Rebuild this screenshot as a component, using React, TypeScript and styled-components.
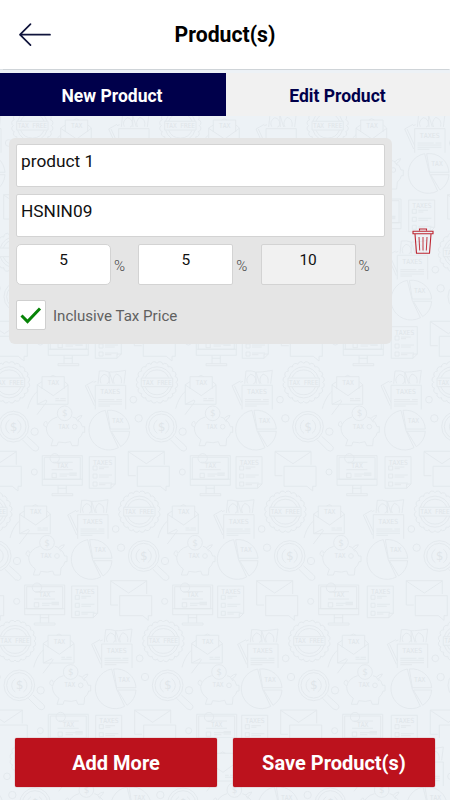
import React, { useState } from "react";
import styled, { createGlobalStyle } from "styled-components";

const GlobalStyle = createGlobalStyle`
  * { box-sizing: border-box; }
  body { margin: 0; background: #edf2f6; font-family: Roboto, sans-serif; }
  button, input { font-family: inherit; }
`;

const Screen = styled.div`
  position: relative;
  display: flex;
  flex-direction: column;
  width: 450px;
  height: 800px;
  overflow: hidden;
  background: #edf2f6;
`;

const Backdrop = styled.svg`
  position: absolute;
  inset: 0;
  width: 450px;
  height: 800px;
  fill: none;
  stroke: #e2e8ec;
  stroke-width: 2.7;
  text {
    fill: #dfe5e9;
    stroke: none;
    font-family: "DejaVu Sans Mono", monospace;
    text-anchor: middle;
  }
`;

const Header = styled.header`
  position: relative;
  display: grid;
  grid-template-columns: 70px 1fr 70px;
  align-items: center;
  height: 69px;
  flex: none;
  background: #fff;
  box-shadow: 0 0.5px 1px #cfd4d8;
`;

const BackButton = styled.button`
  display: flex;
  padding: 0 0 0 18px;
  border: 0;
  background: none;
`;

const Title = styled.h1`
  margin: 0;
  text-align: center;
  font-size: 21.2px;
  line-height: 28px;
  font-weight: 700;
  color: #000;
`;

const Tabs = styled.nav`
  position: relative;
  display: grid;
  grid-template-columns: 226px 1fr;
  height: 43px;
  margin-top: 3.7px;
  flex: none;
`;

const Tab = styled.button<{ $active?: boolean }>`
  padding: 3px ${(p) => (p.$active ? 2 : 1)}px 0 0;
  border: 0;
  font-size: 17.5px;
  font-weight: 700;
  color: ${(p) => (p.$active ? "#fff" : "#00004b")};
  background: ${(p) => (p.$active ? "#00004b" : "#f1f1f1")};
`;

const ProductRow = styled.section`
  position: relative;
  display: flex;
  align-items: center;
  margin: 22px 0 0 9px;
`;

const Card = styled.div`
  display: flex;
  flex-direction: column;
  gap: 7px;
  width: 383px;
  height: 206px;
  padding: 6px 7px;
  border-radius: 6px;
  background: #e5e5e5;
`;

const TextField = styled.input`
  width: 369px;
  height: 43px;
  padding: 0 4px 9px;
  border: 1px solid #d3d3d3;
  border-radius: 2px;
  background: #fff;
  font-size: 17.3px;
  color: #111;
  outline: none;
`;

const Rates = styled.div`
  display: flex;
`;

const Rate = styled.label`
  display: flex;
  align-items: center;
  width: 122.3px;
  gap: 3px;
  font-size: 15px;
  color: #444;
`;

const Percent = styled.span`
  padding-top: 3px;
  font-weight: 300;
`;

const RateInput = styled.input<{ $round?: boolean }>`
  width: 95px;
  height: 41px;
  padding: 0 0 8px;
  border: 1px solid #d3d3d3;
  border-radius: ${(p) => (p.$round ? 5 : 2)}px;
  background: #fff;
  text-align: center;
  font-size: 15.5px;
  color: #111;
  outline: none;
  &:read-only { background: #f1f1f1; }
`;

const CheckRow = styled.div`
  display: flex;
  align-items: center;
  gap: 7px;
  margin-top: 8px;
  font-size: 15.1px;
  color: #606060;
`;

const CheckLabel = styled.span`
  padding-top: 2px;
`;

const CheckBox = styled.button`
  display: flex;
  align-items: center;
  justify-content: center;
  width: 30px;
  height: 30px;
  padding: 0;
  border: 1px solid #cfcfcf;
  border-radius: 2px;
  background: #fff;
`;

const DeleteButton = styled.button`
  display: flex;
  margin: 0 0 0 20.3px;
  padding: 0;
  border: 0;
  background: none;
`;

const Footer = styled.footer`
  position: relative;
  display: flex;
  gap: 16px;
  margin-top: auto;
  padding: 0 15px 13px;
`;

const Action = styled.button`
  flex: 1;
  height: 49px;
  padding: 0;
  border: 0;
  border-radius: 2px;
  background: #bc121d;
  box-shadow: 0 0 1px #b5121b;
  font-size: 20px;
  font-weight: 700;
  color: #fff;
`;

const sealEdge = (() => {
  const points = 20;
  let d = "";
  for (let i = 0; i <= points; i++) {
    const a = (i / points) * Math.PI * 2;
    const x = (57 * Math.cos(a)).toFixed(1);
    const y = (57 * Math.sin(a)).toFixed(1);
    d += i === 0 ? `M${x} ${y}` : `A9.5 9.5 0 0 1 ${x} ${y}`;
  }
  return d;
})();

/* One group of tax drawings, in thirds of a pixel around the seal's centre. */
const Motif = () => (
  <>
    <path d={sealEdge} />
    <path d="M-44-14A46 46 0 0 1 44-14M-44 14A46 46 0 0 0 44 14" />
    <path d="M-35-14A38 38 0 0 1 35-14M-35 14A38 38 0 0 0 35 14" />
    <path d="M-47-13H47V13H-47Z" />

    <path d="M99-2 85 7V66H177V7L167-2M99 19V-17H166V19M85 8 133 40 177 8M124-17q8-8 16 0" />
    <path d="M85 27C75 36 63 52 56 79M85 66 111 53q5 2 1 7L84 97M139 49H150M154 49H170M139 55H170" />

    <path d="M-185 81V9H-94V81M-190-4-215 10-188 70M-208 10-185 60M-190 0-182-3" />
    <path d="M-177 4-173-34Q-157-36-144-31L-142 4M-132 4-143-31Q-128-30-94-36L-99 4M-168 3Q-176-13-159-24Q-143-21-144-4Q-145 4-151 4M-128 4Q-137-10-122-25Q-103-20-107 3" />
    <path d="M-176 52H-128M-122 52H-105M-176 58H-105M-176 65H-105M-176 71H-141" />

    <circle cx="-71" cy="52" r="10" />
    <circle cx="-55" cy="108" r="11" />
    <circle cx="77" cy="148" r="11" />
    <path d="M-155 84A60 60 0 1 0-116 196L-140 145ZM-149 84A60 60 0 0 1-82 140H-140ZM-82 147A60 60 0 0 1-109 193L-137 147Z" />

    <circle cx="13" cy="133" r="46" />
    <circle cx="13" cy="133" r="38" />
    <path d="M1 113A24 24 0 0 0 1 153M25 113A24 24 0 0 1 25 153M40 172 72 204Q82 210 88 202Q91 195 85 190L54 162" />

    <circle cx="167" cy="93" r="22" />
    <path d="M145 104Q117 112 112 137Q112 158 132 172L126 190H144L148 179Q170 184 184 178L189 190H207L209 169Q219 161 221 150H227V133H220Q216 119 207 113Q218 107 219 99Q209 100 202 108L191 104M201 109 209 120M112 134Q99 130 107 119Q114 114 114 124" />
    <circle cx="197" cy="133" r="7" />

    <path d="M100 220H220V309H100ZM106 225H214V291H106ZM100 291H220M147 309V334M172 309V334M147 318H172M129 334H191V340H129ZM128 262H191M132 240H191M181 272H203M181 279H203" />
    <circle cx="137" cy="228" r="14" />
    <path d="M129 273H142V286H129ZM152 275H203M152 281H174" />

    <circle cx="76" cy="269" r="9" />
    <path d="M-203 223H-125V305L-138 318H-203ZM-125 305H-138V318M-192 251H-180V263H-192ZM-192 275H-180V287H-192ZM-192 299H-180V311H-192ZM-174 254H-145M-174 259H-159M-174 278H-135M-174 284H-145M-174 302H-135M-174 307H-155" />

    <path d="M-64 280H-86V207H22V247M-86 208-32 244 22 208M-59 252H37V312H27V326L10 312H-59Z" />
  </>
);

const motifLabels = [
  { text: "TAX FREE", x: 0, y: 7, width: 88, size: 21 },
  { text: "TAX", x: 133, y: 8, width: 34, size: 21 },
  { text: "TAXES", x: -140, y: 36, width: 60, size: 21 },
  { text: "TAX", x: -118, y: 122, width: 34, size: 21 },
  { text: "TAX", x: 164, y: 139, width: 33, size: 21 },
  { text: "TAX", x: 160, y: 257, width: 34, size: 21 },
  { text: "TAXES", x: -163, y: 247, width: 58, size: 21 },
  { text: "$", x: 13, y: 145, width: 22, size: 38 },
  { text: "$", x: 167, y: 102, width: 16, size: 27 },
];

const motifRows = [
  { y: 377, xs: [-347, 97, 541, 983, 1429] },
  { y: 757, xs: [45, 489, 930, 1377] },
  { y: 1147, xs: [27, 471, 911, 1358] },
  { y: 1535, xs: [-26, 418, 856, 1305] },
  { y: 1923, xs: [45, 490, 928, 1377] },
  { y: 2277, xs: [-354, 92, 536, 978, 1424] },
];

/* Labels that the card, the buttons or the screen edge would hide are skipped. */
const isLabelVisible = (x: number, y: number, width: number) => {
  const left = x - width / 2;
  const right = x + width / 2;
  if (right < 8 || left > 1342) return false;
  if (y < 350) return false;
  if (y > 412 && y < 1040 && left < 1178) return false;
  if (y > 2210 && y < 2370) return false;
  return true;
};

const TaxBackdrop = () => (
  <Backdrop viewBox="0 0 1350 2400" aria-hidden="true">
    <defs>
      {motifRows.map((row, i) => (
        <clipPath id={`band-${i}`} key={row.y}>
          <rect
            x="0"
            y={i === 5 ? 2214 : i === 0 ? 210 : row.y - 65}
            width="1350"
            height={i === 4 ? 356 : i === 0 ? 520 : 410}
          />
        </clipPath>
      ))}
    </defs>
    {motifRows.map((row, i) => (
      <g key={row.y} clipPath={`url(#band-${i})`}>
        {row.xs.map((x) => (
          <g key={x} transform={`translate(${x} ${row.y})`}>
            <Motif />
          </g>
        ))}
      </g>
    ))}
    {motifRows.map((row) =>
      row.xs.map((x) =>
        motifLabels
          .filter((l) => isLabelVisible(x + l.x, row.y + l.y, l.width))
          .map((l) => (
            <text
              key={`${x}-${row.y}-${l.x}`}
              x={x + l.x}
              y={row.y + l.y}
              fontSize={l.size}
              textLength={l.width}
              lengthAdjust="spacingAndGlyphs"
            >
              {l.text}
            </text>
          ))
      )
    )}
  </Backdrop>
);

const ArrowIcon = () => (
  <svg width="34" height="26" viewBox="0 0 34 26" fill="none" stroke="#10143c" strokeWidth="1.7" strokeLinecap="round" strokeLinejoin="round">
    <path d="M12.5 2.2 2 12.7 12.5 23.2M2 12.7H32" />
  </svg>
);

const CheckIcon = () => (
  <svg width="22" height="20" viewBox="0 0 22 20" fill="none" stroke="#078307" strokeWidth="3">
    <path d="M1.5 10.5 7.5 16.5 20 3.5" />
  </svg>
);

const TrashIcon = () => (
  <svg width="22" height="28" viewBox="0 0 22 28" fill="none" stroke="#bd2430" strokeWidth="1.1">
    <path d="M7.5 3.5V2H14.5V3.5M1 4.2H21V6.7H1ZM3 7 4.5 26.3H17.5L19 7" />
    <path d="M7 10 7.7 23.5M11 10V23.5M15 10 14.3 23.5" strokeWidth="0.9" />
  </svg>
);

export default function App() {
  const [inclusive, setInclusive] = useState(true);
  return (
    <>
      <GlobalStyle />
      <Screen>
        <TaxBackdrop />
        <Header>
          <BackButton aria-label="Back"><ArrowIcon /></BackButton>
          <Title>Product(s)</Title>
        </Header>
        <Tabs>
          <Tab $active>New Product</Tab>
          <Tab>Edit Product</Tab>
        </Tabs>
        <ProductRow>
          <Card>
            <TextField defaultValue="product 1" />
            <TextField defaultValue="HSNIN09" />
            <Rates>
              <Rate><RateInput $round defaultValue="5" /><Percent>%</Percent></Rate>
              <Rate><RateInput defaultValue="5" /><Percent>%</Percent></Rate>
              <Rate><RateInput readOnly value="10" /><Percent>%</Percent></Rate>
            </Rates>
            <CheckRow>
              <CheckBox aria-label="Inclusive Tax Price" onClick={() => setInclusive(!inclusive)}>
                {inclusive && <CheckIcon />}
              </CheckBox>
              <CheckLabel>Inclusive Tax Price</CheckLabel>
            </CheckRow>
          </Card>
          <DeleteButton aria-label="Delete"><TrashIcon /></DeleteButton>
        </ProductRow>
        <Footer>
          <Action>Add More</Action>
          <Action>Save Product(s)</Action>
        </Footer>
      </Screen>
    </>
  );
}
